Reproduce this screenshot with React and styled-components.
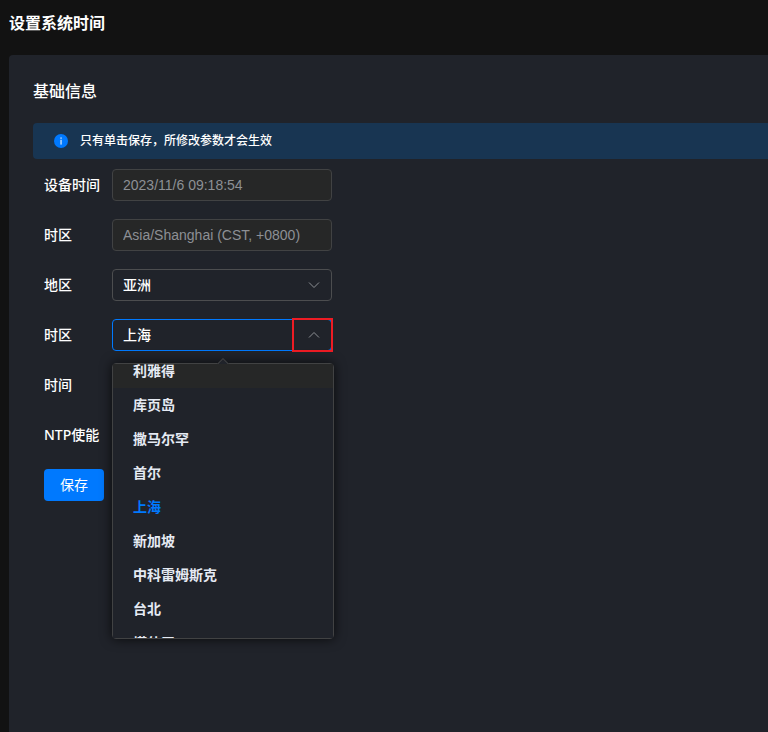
import React, { useEffect, useRef, useState } from "react";
import styled, { createGlobalStyle, ThemeProvider } from "styled-components";

const theme = {
  page: "#121212",
  panel: "#20232a",
  primary: "#0079fe",
  notice: "#183552",
  disabled: "#262727",
  border: "#4c4d4f",
  disabledBorder: "#414243",
  text: "#ffffff",
  optionText: "#e5eaf3",
  muted: "#8d9095",
  mark: "#ed1c24",
};

const cities = [
  "利雅得",
  "库页岛",
  "撒马尔罕",
  "首尔",
  "上海",
  "新加坡",
  "中科雷姆斯克",
  "台北",
  "塔什干",
];

const Chevron = ({ up }) => (
  <ChevronIcon viewBox="0 0 12 12" aria-hidden="true">
    <path d={up ? "M1 8.5 L6 3.5 L11 8.5" : "M1 3.5 L6 8.5 L11 3.5"} />
  </ChevronIcon>
);

const CityList = ({ value, onPick }) => {
  const list = useRef(null);

  useEffect(() => {
    list.current.scrollTop = 10;
  }, []);

  return (
    <Popper>
      <Options ref={list} role="listbox" aria-label="时区">
        {cities.map((city, i) => (
          <Option
            key={city}
            role="option"
            aria-selected={city === value}
            $active={i === 0}
            $selected={city === value}
            onClick={() => onPick(city)}
          >
            {city}
          </Option>
        ))}
      </Options>
    </Popper>
  );
};

const App = () => {
  const [city, setCity] = useState("上海");

  return (
    <ThemeProvider theme={theme}>
      <GlobalStyle />
      <Page>
        <PageTitle>设置系统时间</PageTitle>
        <Panel>
          <PanelTitle>基础信息</PanelTitle>
          <Notice>
            <InfoIcon viewBox="0 0 14 14" aria-hidden="true">
              <circle cx="7" cy="7" r="7" />
              <rect x="6.4" y="3.4" width="1.3" height="1.4" />
              <rect x="6.4" y="5.8" width="1.3" height="4.8" />
            </InfoIcon>
            只有单击保存，所修改参数才会生效
          </Notice>
          <Form onSubmit={(e) => e.preventDefault()}>
            <Row>
              <Label htmlFor="deviceTime">设备时间</Label>
              <Field>
                <Input id="deviceTime" defaultValue="2023/11/6 09:18:54" disabled />
              </Field>
            </Row>
            <Row>
              <Label htmlFor="zone">时区</Label>
              <Field>
                <Input id="zone" defaultValue="Asia/Shanghai (CST, +0800)" disabled />
              </Field>
            </Row>
            <Row>
              <Label htmlFor="region">地区</Label>
              <Field>
                <Select id="region" defaultValue="亚洲">
                  <option>亚洲</option>
                </Select>
                <Chevron />
              </Field>
            </Row>
            <Row>
              <Label htmlFor="city">时区</Label>
              <Field>
                <Select id="city" $open value={city} onChange={(e) => setCity(e.target.value)}>
                  {cities.map((c) => (
                    <option key={c}>{c}</option>
                  ))}
                </Select>
                <Chevron up />
                <Mark />
                <CityList value={city} onPick={setCity} />
              </Field>
            </Row>
            <Row>
              <Label htmlFor="time">时间</Label>
              <Field>
                <Input id="time" />
              </Field>
            </Row>
            <Row>
              <Label htmlFor="ntp">NTP使能</Label>
              <Field>
                <Checkbox id="ntp" type="checkbox" />
              </Field>
            </Row>
            <SaveButton type="submit">保存</SaveButton>
          </Form>
        </Panel>
      </Page>
    </ThemeProvider>
  );
};
export default App;


const GlobalStyle = createGlobalStyle`
  * {
    box-sizing: border-box;
  }
  body {
    margin: 0;
    background: ${props => props.theme.page};
    color: ${props => props.theme.text};
    font-family: "Noto Sans", "Noto Sans CJK SC", sans-serif;
    font-size: 14px;
  }
`;

const Page = styled.div`
  display: flex;
  flex-direction: column;
  min-height: 100vh;
  padding-left: 9px;
`;

const PageTitle = styled.h1`
  margin: 0;
  padding: 11px 0 20px;
  font-size: 16px;
  line-height: 24px;
  font-weight: 700;
`;

const Panel = styled.main`
  flex: 1;
  padding: 24px 0 24px 24px;
  border-radius: 4px 0 0 0;
  background: ${props => props.theme.panel};
`;

const PanelTitle = styled.h2`
  margin: 0 0 20px;
  font-size: 16px;
  line-height: 24px;
  font-weight: 500;
`;

const Notice = styled.div`
  display: flex;
  align-items: center;
  gap: 12px;
  height: 36px;
  padding: 0 21px;
  border-radius: 4px 0 0 4px;
  background: ${props => props.theme.notice};
  font-size: 12px;
  line-height: 18px;
  font-weight: 500;
`;

const InfoIcon = styled.svg`
  width: 14px;
  height: 14px;
  fill: ${props => props.theme.primary};

  rect {
    fill: #d3e4f7;
  }
`;

const Form = styled.form`
  padding: 10px 11px;
`;

const Row = styled.div`
  display: flex;
  align-items: center;
  margin-bottom: 18px;
`;

const Label = styled.label`
  width: 68px;
  line-height: 32px;
  font-weight: 500;
  white-space: nowrap;
`;

const Field = styled.div`
  position: relative;
  display: flex;
  align-items: center;
  width: 220px;
  height: 32px;
`;

const Input = styled.input`
  width: 100%;
  height: 32px;
  padding: 0 10px;
  border: 1px solid ${props => props.theme.border};
  border-radius: 4px;
  outline: none;
  background: transparent;
  color: ${props => props.theme.text};
  font-family: "Liberation Sans", "Noto Sans CJK SC", sans-serif;
  font-size: 14px;

  &:disabled {
    border-color: ${props => props.theme.disabledBorder};
    background: ${props => props.theme.disabled};
    color: ${props => props.theme.muted};
  }
`;

const Select = styled.select`
  appearance: none;
  width: 100%;
  height: 32px;
  padding: 0 32px 0 10px;
  border: 1px solid ${props => (props.$open ? props.theme.primary : props.theme.border)};
  border-radius: 4px;
  outline: none;
  background: transparent;
  color: ${props => props.theme.text};
  font-family: inherit;
  font-size: 14px;
  line-height: 30px;
  font-weight: 500;
`;

const ChevronIcon = styled.svg`
  position: absolute;
  right: 12px;
  width: 12px;
  height: 12px;
  fill: none;
  stroke: ${props => props.theme.muted};
  pointer-events: none;
`;

const Mark = styled.span`
  position: absolute;
  top: -1px;
  right: -1px;
  width: 41px;
  height: 34px;
  border: 2px solid ${props => props.theme.mark};
  pointer-events: none;
`;

const Popper = styled.div`
  position: absolute;
  z-index: 1;
  top: 44px;
  left: 0;
  width: 222px;
  border: 1px solid ${props => props.theme.disabledBorder};
  border-radius: 4px;
  background: ${props => props.theme.panel};
  box-shadow: 0 0 12px rgba(0, 0, 0, 0.72);

  &::before {
    content: "";
    position: absolute;
    z-index: -1;
    top: -4px;
    left: 105px;
    width: 8px;
    height: 8px;
    border: 1px solid ${props => props.theme.disabledBorder};
    background: ${props => props.theme.panel};
    transform: rotate(45deg);
  }
`;

const Options = styled.ul`
  height: 274px;
  margin: 0;
  padding: 0;
  overflow-y: auto;
  scrollbar-width: none;
  list-style: none;
`;

const Option = styled.li`
  height: 34px;
  padding: 0 20px;
  line-height: 34px;
  font-weight: 700;
  color: ${props => (props.$selected ? props.theme.primary : props.theme.optionText)};
  background: ${props => (props.$active ? props.theme.disabled : props.theme.panel)};
  cursor: pointer;
`;

const Checkbox = styled.input`
  margin: 0;
`;

const SaveButton = styled.button`
  width: 60px;
  height: 32px;
  padding: 0;
  border: none;
  border-radius: 4px;
  background: ${props => props.theme.primary};
  color: ${props => props.theme.text};
  font-family: inherit;
  font-size: 14px;
  line-height: 32px;
  cursor: pointer;
`;
